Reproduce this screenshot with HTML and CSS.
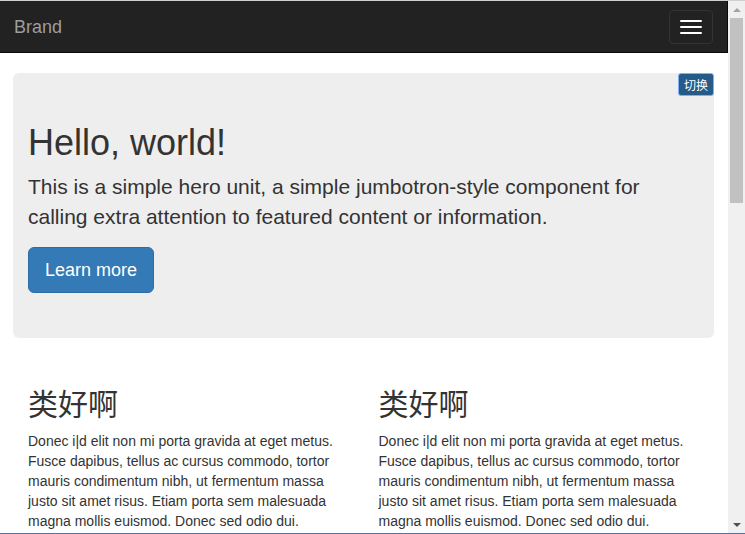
FILE: index.html
```html
<!DOCTYPE html>
<html lang="zh-CN">
<head>
<meta charset="utf-8">
<title>Brand</title>
<link rel="stylesheet" href="styles.css">
</head>
<body>
<div class="window">
  <div class="topline"></div>
  <div class="frame">
    <div class="page">
      <nav class="navbar">
        <a class="brand" href="#">Brand</a>
        <button class="toggle" type="button" aria-label="Toggle navigation">
          <span class="bar"></span><span class="bar"></span><span class="bar"></span>
        </button>
      </nav>
      <main class="container">
        <section class="jumbotron">
          <button class="switch" type="button">切换</button>
          <h1 class="hero-title">Hello, world!</h1>
          <p class="hero-text">This is a simple hero unit, a simple jumbotron-style component for calling extra attention to featured content or information.</p>
          <p class="hero-action"><a class="btn-lg" href="#">Learn more</a></p>
        </section>
        <div class="row">
          <div class="col">
            <h2 class="col-title">类好啊</h2>
            <p class="col-text">Donec i|d elit non mi porta gravida at eget metus. Fusce dapibus, tellus ac cursus commodo, tortor mauris condimentum nibh, ut fermentum massa justo sit amet risus. Etiam porta sem malesuada magna mollis euismod. Donec sed odio dui.</p>
          </div>
          <div class="col">
            <h2 class="col-title">类好啊</h2>
            <p class="col-text">Donec i|d elit non mi porta gravida at eget metus. Fusce dapibus, tellus ac cursus commodo, tortor mauris condimentum nibh, ut fermentum massa justo sit amet risus. Etiam porta sem malesuada magna mollis euismod. Donec sed odio dui.</p>
          </div>
        </div>
      </main>
    </div>
    <div class="scrollbar">
      <div class="arrow arrow-up"></div>
      <div class="track"><div class="thumb"></div></div>
      <div class="arrow arrow-down"></div>
    </div>
  </div>
  <div class="bottomline"></div>
</div>
</body>
</html>
```

FILE: styles.css
```css
html, body {
  margin: 0;
  padding: 0;
  height: 534px;
  overflow: hidden;
  background: #fff;
}
body {
  font-family: "Liberation Sans", Arial, "Noto Sans CJK SC", sans-serif;
  color: #333;
  font-size: 14px;
  line-height: 20px;
}
.window {
  display: flex;
  flex-direction: column;
  height: 534px;
}
.topline {
  height: 1px;
  background: #cfcfcf;
  flex: none;
}
.bottomline {
  height: 1px;
  background: #2b7bd0;
  flex: none;
}
.frame {
  flex: 1;
  display: flex;
  min-height: 0;
}
.page {
  flex: 1;
  min-width: 0;
  overflow: hidden;
}
.navbar {
  height: 51px;
  background: #222;
  border-bottom: 1px solid #080808;
  border-right: 1px solid #080808;
  display: flex;
  align-items: flex-start;
  justify-content: space-between;
  padding: 0 14px 0 14px;
  margin-bottom: 20px;
}
.brand {
  color: #9d9d9d;
  font-size: 18px;
  line-height: 20px;
  padding: 16px 0 15px;
  text-decoration: none;
}
.toggle {
  margin-top: 9px;
  width: 44px;
  height: 34px;
  padding: 9px 10px;
  background: transparent;
  border: 1px solid #333;
  border-radius: 4px;
  display: flex;
  flex-direction: column;
  gap: 4px;
  box-sizing: border-box;
  justify-content: center;
}
.bar {
  display: block;
  width: 22px;
  height: 2px;
  background: #fff;
  border-radius: 1px;
}
.container {
  padding: 0 14px 0 13px;
}
.jumbotron {
  position: relative;
  background: #eee;
  border-radius: 6px;
  padding: 30px 15px;
  margin-bottom: 30px;
}
.switch {
  position: absolute;
  top: 0;
  right: 0;
  width: 36px;
  height: 23px;
  padding: 0;
  background: #265a88;
  color: #fff;
  border: 1px solid #7fb0ef;
  border-radius: 3px;
  font-family: "Noto Sans CJK SC", sans-serif;
  font-size: 12px;
  line-height: 20px;
}
.hero-title {
  margin: 20px 0 10px;
  font-size: 36px;
  line-height: 39px;
  font-weight: 500;
}
.hero-text {
  margin: 0 0 15px;
  font-size: 21px;
  line-height: 30px;
  font-weight: 300;
}
.hero-action {
  margin: 0 0 15px;
}
.btn-lg {
  display: inline-block;
  padding: 10px 16px;
  font-size: 18px;
  line-height: 24px;
  color: #fff;
  background: #337ab7;
  border: 1px solid #2e6da4;
  border-radius: 6px;
  text-decoration: none;
}
.row {
  display: grid;
  grid-template-columns: 1fr 1fr;
}
.col {
  padding: 0 15px;
}
.col-title {
  margin: 20px 0 10px;
  font-family: "Liberation Sans", "Noto Sans CJK SC", sans-serif;
  font-size: 30px;
  line-height: 33px;
  font-weight: 400;
}
.col-text {
  margin: 0 0 10px;
}
.scrollbar {
  width: 17px;
  flex: none;
  background: #f0f0f0;
  display: flex;
  flex-direction: column;
}
.arrow {
  height: 17px;
  flex: none;
  display: flex;
  align-items: center;
  justify-content: center;
}
.arrow::before {
  content: "";
  width: 0;
  height: 0;
  border-left: 4px solid transparent;
  border-right: 4px solid transparent;
}
.arrow-up::before {
  border-bottom: 4px solid #a3a3a3;
}
.arrow-down::before {
  border-top: 4px solid #505050;
}
.track {
  flex: 1;
  padding: 0 2px;
}
.thumb {
  height: 185px;
  background: #c1c1c1;
}
```
